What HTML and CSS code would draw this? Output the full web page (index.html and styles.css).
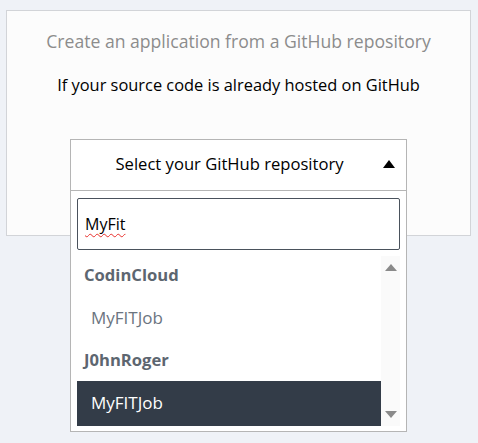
FILE: index.html
```html
<!DOCTYPE html>
<html>
<head>
<meta charset="utf-8">
<link rel="stylesheet" href="styles.css">
</head>
<body>
<div class="card">
  <div class="title">Create an application from a GitHub repository</div>
  <div class="subtitle">If your source code is already hosted on GitHub</div>
  <div class="dropdown">
    <div class="dd-head">
      <span class="dd-label">Select your GitHub repository</span>
      <span class="caret"></span>
    </div>
    <div class="dd-body">
      <div class="search"><span class="typo">MyFit</span></div>
      <div class="list">
        <div class="options">
          <div class="group">CodinCloud</div>
          <div class="option">MyFITJob</div>
          <div class="group">J0hnRoger</div>
          <div class="option selected">MyFITJob</div>
        </div>
        <div class="scrollbar">
          <span class="arrow up"></span>
          <span class="arrow down"></span>
        </div>
      </div>
    </div>
  </div>
</div>
</body>
</html>
```
FILE: styles.css
```css
* { box-sizing: border-box; }
html, body { margin: 0; padding: 0; }
body {
  background: #eff2f7;
  font-family: "Open Sans", "Noto Sans", sans-serif;
  padding: 10px 8px 0 6px;
  height: 443px;
  overflow: hidden;
}
.card {
  width: 465px;
  height: 226px;
  background: #fcfcfc;
  border: 1px solid #d2d4d8;
  padding-top: 19px;
  padding-left: 63px;
  display: flex;
  flex-direction: column;
}
.title, .subtitle {
  width: 463px;
  margin-left: -63px;
  text-align: center;
  line-height: 22px;
  white-space: nowrap;
}
.title {
  font-size: 17.6px;
  color: #8c8c8c;
}
.subtitle {
  margin-top: 22px;
  font-size: 16.4px;
  color: #000;
}
.dropdown {
  margin-top: 43px;
  width: 337px;
  background: #fff;
  border: 1px solid #b5b5b5;
  flex: none;
}
.dd-head {
  height: 51px;
  border-bottom: 1px solid #b5b5b5;
  display: flex;
  align-items: center;
  justify-content: center;
  position: relative;
}
.dd-label {
  font-size: 16.6px;
  color: #000;
  margin-top: -3px;
  margin-left: -18px;
}
.caret {
  position: absolute;
  right: 11px;
  top: 20px;
  width: 0; height: 0;
  border-left: 6px solid transparent;
  border-right: 6px solid transparent;
  border-bottom: 8px solid #000;
}
.dd-body {
  padding: 7px 6px 5px 6px;
}
.search {
  height: 52px;
  border: 1px solid #4a525c;
  border-radius: 2px;
  display: flex;
  align-items: center;
  padding-left: 7px;
  font-size: 16px;
  color: #000;
}
.typo {
  text-decoration: underline wavy #e8302c;
  text-decoration-thickness: 1px;
  text-decoration-skip-ink: none;
  text-underline-offset: 3px;
}
.list {
  margin-top: 6px;
  display: flex;
  height: 170px;
}
.options {
  flex: 1;
}
.group {
  height: 40px;
  display: flex;
  align-items: center;
  padding-left: 7px;
  padding-bottom: 4px;
  font-weight: 700;
  font-size: 16.6px;
  color: #5d6670;
}
.option {
  height: 45px;
  display: flex;
  align-items: center;
  padding-left: 14px;
  padding-bottom: 3px;
  font-size: 17px;
  color: #6b7480;
}
.option.selected {
  background: #333c48;
  color: #fff;
}
.scrollbar {
  width: 19px;
  background: #fafafa;
  display: flex;
  flex-direction: column;
  justify-content: space-between;
  align-items: center;
  padding: 8px 0 8px 0;
}
.arrow {
  width: 0; height: 0;
  border-left: 6px solid transparent;
  border-right: 6px solid transparent;
}
.arrow.up { border-bottom: 7px solid #8a8a8a; }
.arrow.down { border-top: 7px solid #8a8a8a; }
```
